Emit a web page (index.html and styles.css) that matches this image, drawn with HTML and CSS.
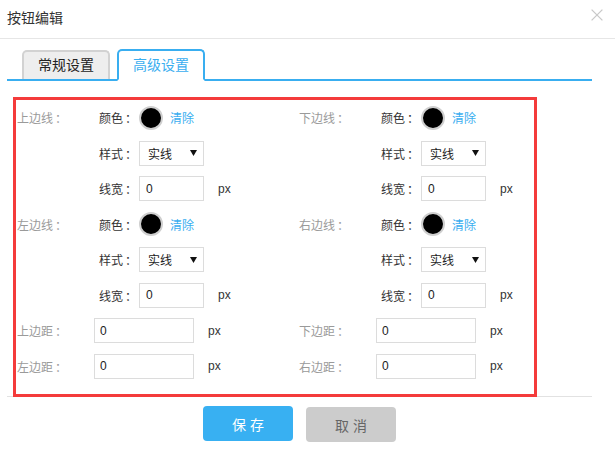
FILE: index.html
```html
<!DOCTYPE html>
<html lang="zh-CN">
<head>
<meta charset="utf-8">
<title>按钮编辑</title>
<link rel="stylesheet" href="styles.css">
</head>
<body>
<div class="dialog">
  <div class="dlg-header">
    <span class="dlg-title">按钮编辑</span>
    <span class="dlg-close"><svg width="12" height="12" viewBox="0 0 12 12"><path d="M0.6 0.6L11.4 11.4M11.4 0.6L0.6 11.4" stroke="#c9c9c9" stroke-width="1.3" fill="none"/></svg></span>
  </div>
  <div class="dlg-body">
    <ul class="tabs">
      <li class="tab">常规设置</li>
      <li class="tab active">高级设置</li>
    </ul>
    <div class="panel">
      <div class="frame">
        <div class="grid">
          <div class="group">
            <div class="group-label">上边线<span class="colon">：</span></div>
            <div class="group-rows">
              <div class="row"><span class="sub-label">颜色<span class="colon">：</span></span><span class="swatch"></span><a class="clear">清除</a></div>
              <div class="row"><span class="sub-label">样式<span class="colon">：</span></span><div class="select"><span>实线</span><svg width="7" height="6" viewBox="0 0 7 6"><path d="M0 0H7L3.5 6Z" fill="#111"/></svg></div></div>
              <div class="row"><span class="sub-label">线宽<span class="colon">：</span></span><div class="input">0</div><span class="unit">px</span></div>
            </div>
          </div>
          <div class="group">
            <div class="group-label">下边线<span class="colon">：</span></div>
            <div class="group-rows">
              <div class="row"><span class="sub-label">颜色<span class="colon">：</span></span><span class="swatch"></span><a class="clear">清除</a></div>
              <div class="row"><span class="sub-label">样式<span class="colon">：</span></span><div class="select"><span>实线</span><svg width="7" height="6" viewBox="0 0 7 6"><path d="M0 0H7L3.5 6Z" fill="#111"/></svg></div></div>
              <div class="row"><span class="sub-label">线宽<span class="colon">：</span></span><div class="input">0</div><span class="unit">px</span></div>
            </div>
          </div>
          <div class="group">
            <div class="group-label">左边线<span class="colon">：</span></div>
            <div class="group-rows">
              <div class="row"><span class="sub-label">颜色<span class="colon">：</span></span><span class="swatch"></span><a class="clear">清除</a></div>
              <div class="row"><span class="sub-label">样式<span class="colon">：</span></span><div class="select"><span>实线</span><svg width="7" height="6" viewBox="0 0 7 6"><path d="M0 0H7L3.5 6Z" fill="#111"/></svg></div></div>
              <div class="row"><span class="sub-label">线宽<span class="colon">：</span></span><div class="input">0</div><span class="unit">px</span></div>
            </div>
          </div>
          <div class="group">
            <div class="group-label">右边线<span class="colon">：</span></div>
            <div class="group-rows">
              <div class="row"><span class="sub-label">颜色<span class="colon">：</span></span><span class="swatch"></span><a class="clear">清除</a></div>
              <div class="row"><span class="sub-label">样式<span class="colon">：</span></span><div class="select"><span>实线</span><svg width="7" height="6" viewBox="0 0 7 6"><path d="M0 0H7L3.5 6Z" fill="#111"/></svg></div></div>
              <div class="row"><span class="sub-label">线宽<span class="colon">：</span></span><div class="input">0</div><span class="unit">px</span></div>
            </div>
          </div>
          <div class="row margin-row"><span class="margin-label">上边距<span class="colon">：</span></span><div class="input wide">0</div><span class="unit">px</span></div>
          <div class="row margin-row"><span class="margin-label">下边距<span class="colon">：</span></span><div class="input wide">0</div><span class="unit">px</span></div>
          <div class="row margin-row"><span class="margin-label">左边距<span class="colon">：</span></span><div class="input wide">0</div><span class="unit">px</span></div>
          <div class="row margin-row"><span class="margin-label">右边距<span class="colon">：</span></span><div class="input wide">0</div><span class="unit">px</span></div>
        </div>
      </div>
    </div>
    <div class="actions">
      <button class="btn btn-primary">保 存</button>
      <button class="btn btn-default">取 消</button>
    </div>
  </div>
</div>
</body>
</html>
```

FILE: styles.css
```css
* { box-sizing: border-box; }
html, body { margin: 0; padding: 0; background: #fff; }
body {
  font-family: "Liberation Sans", "Noto Sans CJK SC", sans-serif;
  color: #333;
  font-size: 12px;
}
.dialog { width: 615px; }

.dlg-header {
  height: 39px;
  border-bottom: 1px solid #e6e6e6;
  display: flex;
  justify-content: space-between;
  align-items: center;
  padding: 0 12px 5px 7px;
}
.dlg-title { font-size: 14px; color: #333; }
.dlg-close { display: flex; align-self: flex-start; margin-top: 9px; }

.dlg-body { padding: 0 23px 0 7px; }

.tabs {
  list-style: none;
  margin: 10px 0 0;
  padding: 0 0 0 15px;
  display: flex;
  align-items: flex-end;
  gap: 7px;
  border-bottom: 2px solid #39aef0;
}
.tab {
  font-size: 14px;
  padding: 0 14px;
  height: 29px;
  line-height: 27px;
  border: 2px solid #d2d2d2;
  border-bottom: none;
  border-radius: 5px 5px 0 0;
  background: #eeeeee;
  color: #222;
}
.tab.active {
  height: 32px;
  line-height: 28px;
  margin-bottom: -2px;
  border: 2px solid #39aef0;
  border-bottom: 2px solid #fff;
  background: #fff;
  color: #39aef0;
}

.panel {
  border-bottom: 1px solid #e2e2e2;
  padding: 16px 0 0 6px;
}
.frame {
  width: 524px;
  border: 3px solid #f43b3b;
  margin-bottom: -1px;
  padding: 0 0 10px 1px;
}
.grid {
  display: grid;
  grid-template-columns: 282px 1fr;
}
.group { display: flex; }
.group-label {
  width: 82px;
  height: 35.5px;
  display: flex;
  align-items: center;
  color: #9a9a9a;
}
.colon { padding-left: 2px; }
.group-rows { display: flex; flex-direction: column; }
.row {
  height: 35.5px;
  display: flex;
  align-items: center;
}
.sub-label { width: 40px; color: #333; }
.swatch {
  width: 24px;
  height: 24px;
  border-radius: 50%;
  background: #000;
  border: 2px solid #cfcfcf;
}
.clear { margin-left: 7px; color: #39aef0; }
.select {
  width: 65px;
  height: 25px;
  border: 1px solid #dcdcdc;
  display: flex;
  align-items: center;
  justify-content: space-between;
  padding: 0 6px 0 8px;
  color: #222;
}
.input {
  width: 65px;
  height: 25px;
  border: 1px solid #dcdcdc;
  display: flex;
  align-items: center;
  padding-left: 6px;
  color: #222;
}
.input.wide { width: 100px; padding-left: 5px; }
.unit { margin-left: 14px; color: #333; }
.margin-label { width: 77px; color: #9a9a9a; }

.actions {
  display: flex;
  justify-content: center;
  gap: 13px;
  margin-top: 9px;
}
.btn {
  width: 90px;
  height: 35px;
  border: none;
  border-radius: 4px;
  font-family: "Liberation Sans", "Noto Sans CJK SC", sans-serif;
  font-size: 14px;
  padding: 0;
}
.btn-primary { background: #38b0f2; color: #fff; }
.btn-default { background: #cccccc; color: #666; margin-top: 1px; }
```
